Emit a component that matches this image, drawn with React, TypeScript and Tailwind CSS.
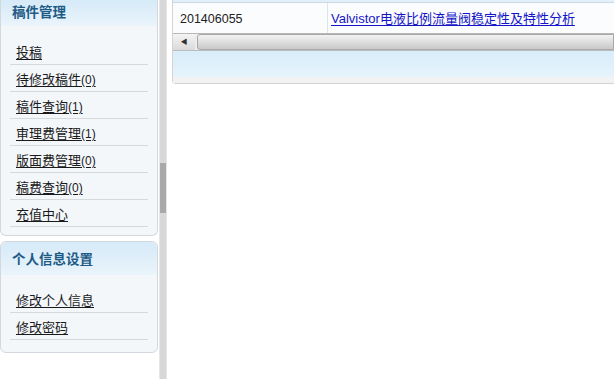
import React from "react";

const font = { fontFamily: '"Liberation Sans", "Noto Sans CJK SC", sans-serif' };

function Item({ label, count }: { label: string; count?: string }) {
  return (
    <div className="h-[27px] mx-[9px] border-b border-[#d6d9dc] flex items-center pl-[6px] pt-[2px]">
      <a className="text-[13px] text-[#1a1a1a] underline underline-offset-2 leading-none">
        {label}
        {count && <span className="text-[12px]">{count}</span>}
      </a>
    </div>
  );
}

function Panel({ title, children, top }: { title: string; children: React.ReactNode; top?: boolean }) {
  return (
    <div
      className={
        "border border-[#d3d8de] bg-[#f4f7fa] rounded-b-[6px] " + (top ? "border-t-0" : "rounded-t-[6px] mt-[5px]")
      }
    >
      <div
        className={
          "bg-gradient-to-b from-[#d6eaf8] to-[#eaf4fb] flex items-center pl-[11px] text-[13.5px] font-bold text-[#1d5b87] " +
          (top ? "h-[26px]" : "h-[33px] rounded-t-[6px] pt-[3px]")
        }
      >
        {title}
      </div>
      <div className={top ? "pt-[12px] pb-[8px]" : "pt-[11px] pb-[12px]"}>{children}</div>
    </div>
  );
}

export default function App() {
  return (
    <div className="w-[614px] h-[379px] bg-white flex overflow-hidden" style={font}>
      <div className="w-[159px] shrink-0 pr-[1px] bg-white">
        <Panel title="稿件管理" top>
          <Item label="投稿" />
          <Item label="待修改稿件" count="(0)" />
          <Item label="稿件查询" count="(1)" />
          <Item label="审理费管理" count="(1)" />
          <Item label="版面费管理" count="(0)" />
          <Item label="稿费查询" count="(0)" />
          <Item label="充值中心" />
        </Panel>
        <Panel title="个人信息设置">
          <Item label="修改个人信息" />
          <Item label="修改密码" />
        </Panel>
      </div>
      <div className="w-[8px] shrink-0 bg-[#d8d8d8] border-x border-[#e6e6e6] pt-[163px]">
        <div className="h-[50px] bg-[#a9a9a9]" />
      </div>
      <div className="flex-1 pl-[5px]">
        <div className="border-l border-b border-[#d4d4d4] rounded-bl-[4px] h-[84px] flex flex-col">
          <div className="h-[3px] bg-[#e3f0fa] border-b border-[#c9d9e6]" />
          <div className="h-[31px] flex border-b border-[#b8b8b8] bg-[#fbfcfe]">
            <div className="w-[155px] border-r border-[#dde5ec] flex items-center pl-[7px] pt-[2px] text-[12.5px] text-[#222]">
              201406055
            </div>
            <div className="flex-1 flex items-center pl-[3px] pt-[2px] text-[13px]">
              <a className="text-[#1515c8] underline underline-offset-2 whitespace-nowrap">
                Valvistor电液比例流量阀稳定性及特性分析
              </a>
            </div>
          </div>
          <div className="h-[17px] flex bg-[#ececec] border-b border-[#bcbcbc]">
            <div className="w-[22px] flex items-center justify-center text-[7px] text-[#333] bg-gradient-to-b from-[#f4f4f4] to-[#dadada]">
              ◀
            </div>
            <div className="flex-1 ml-[2px] rounded-l-[3px] border border-[#a8a8a8] bg-gradient-to-b from-[#f3f3f3] via-[#dedede] to-[#c9c9c9]" />
          </div>
          <div className="flex-1 bg-gradient-to-b from-[#d9edfa] to-[#e6f3fb]" />
          <div className="h-[6px] bg-[#f2f2f2]" />
        </div>
      </div>
    </div>
  );
}
